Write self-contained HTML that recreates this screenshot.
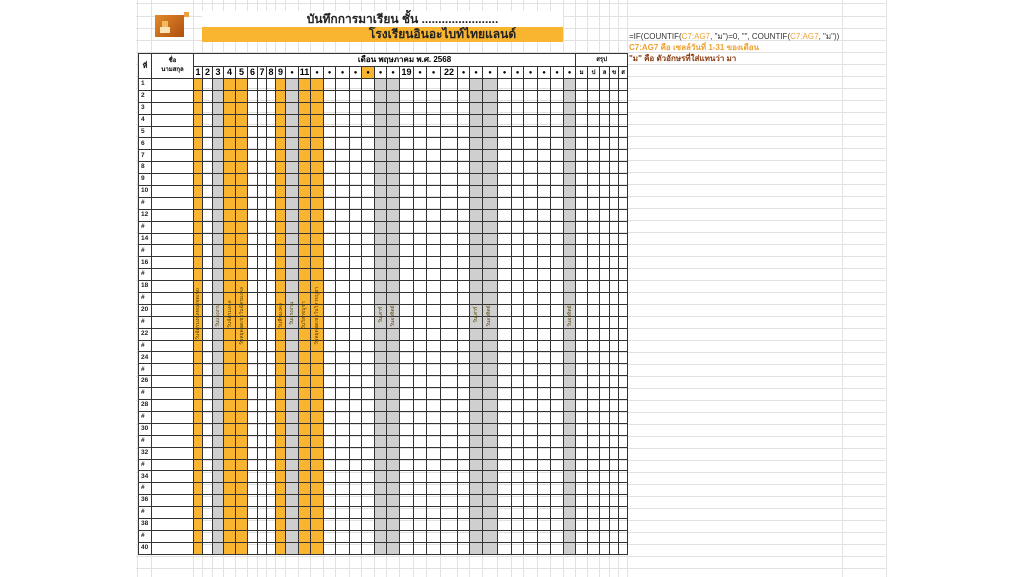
<!DOCTYPE html>
<html><head><meta charset="utf-8">
<style>
*{margin:0;padding:0;box-sizing:border-box}
body{width:1024px;height:577px;background:#fff;position:relative;overflow:hidden;font-family:"Liberation Sans","Noto Sans CJK SC",sans-serif}
#grid{position:absolute;left:136px;top:0;width:750px;height:577px;
background-image:repeating-linear-gradient(to bottom,transparent 0,transparent 11px,#e2e2e2 11px,#e2e2e2 12px);background-position:0 5px}
.vl{position:absolute;top:0;width:1px;height:577px;background:#e2e2e2}
table{position:absolute;left:138px;top:53px;border-collapse:collapse;table-layout:fixed;width:488px;background:transparent}
td{border:1px solid #333;font-size:7px;text-align:center;vertical-align:middle;overflow:hidden;white-space:nowrap;padding:0;line-height:1}
tr.d td{height:11.9px}
tr.d td.n{background:#fff;font-size:6.5px;font-weight:bold;text-align:left;padding-left:2px;color:#222}
tr.d td.nm{background:#fff}
.h td{background:#fff;font-weight:bold}
.h2 td{font-size:9px;height:12px}
.h2 td.dt{font-size:6px}
.o{background:#f9b52f}
.g{background:#cfcfcf}
.vt{position:absolute;font-size:5px;color:#5a4000;transform:rotate(-90deg);transform-origin:left top;white-space:nowrap}
</style></head><body>
<div id="grid"></div>
<div class="vl" style="left:137px"></div><div class="vl" style="left:151px"></div><div class="vl" style="left:193px"></div>
<div class="vl" style="left:202px"></div><div class="vl" style="left:212px"></div><div class="vl" style="left:223px"></div><div class="vl" style="left:235px"></div><div class="vl" style="left:247px"></div><div class="vl" style="left:257px"></div><div class="vl" style="left:266px"></div><div class="vl" style="left:275px"></div><div class="vl" style="left:285px"></div><div class="vl" style="left:298px"></div><div class="vl" style="left:310px"></div><div class="vl" style="left:323px"></div><div class="vl" style="left:335px"></div><div class="vl" style="left:349px"></div><div class="vl" style="left:361px"></div><div class="vl" style="left:374px"></div><div class="vl" style="left:386px"></div><div class="vl" style="left:399px"></div><div class="vl" style="left:413px"></div><div class="vl" style="left:426px"></div><div class="vl" style="left:440px"></div><div class="vl" style="left:457px"></div><div class="vl" style="left:469px"></div><div class="vl" style="left:482px"></div><div class="vl" style="left:497px"></div><div class="vl" style="left:511px"></div><div class="vl" style="left:523px"></div><div class="vl" style="left:537px"></div><div class="vl" style="left:550px"></div><div class="vl" style="left:563px"></div><div class="vl" style="left:575px"></div><div class="vl" style="left:587px"></div><div class="vl" style="left:599px"></div><div class="vl" style="left:609px"></div><div class="vl" style="left:618px"></div><div class="vl" style="left:627px"></div><div class="vl" style="left:842px"></div><div class="vl" style="left:886px"></div>

<div style="position:absolute;left:155px;top:15px;width:29px;height:22px;background:linear-gradient(135deg,#e08a2a,#b14f10)"></div>
<div style="position:absolute;left:160px;top:27px;width:10px;height:6px;background:#fbe3b5"></div>
<div style="position:absolute;left:162px;top:21px;width:6px;height:6px;background:#f4b860"></div>
<div style="position:absolute;left:184px;top:12px;width:5px;height:5px;background:#f0a040"></div>

<div style="position:absolute;left:202px;top:11px;width:361px;height:16px;background:#fff;text-align:center;font-weight:bold;font-size:12px;line-height:16px;color:#222;padding-left:40px">บันทึกการมาเรียน ชั้น .......................</div>
<div style="position:absolute;left:202px;top:27px;width:361px;height:15px;background:#f9b52f;text-align:center;font-weight:bold;font-size:12px;line-height:15px;color:#222;padding-left:120px">โรงเรียนอินอะไบท์ไทยแลนด์</div>

<div style="position:absolute;left:629px;top:31px;font-size:8px;line-height:11px;color:#333;white-space:nowrap">=IF(COUNTIF(<span style="color:#f0a030">C7:AG7</span>, "ม")=0, "", COUNTIF(<span style="color:#f0a030">C7:AG7</span>, "ม"))<br><span style="color:#f0a030;font-weight:bold">C7:AG7 คือ เซลล์วันที่ 1-31 ของเดือน</span><br><span style="color:#8a3a10;font-weight:bold">"ม" คือ ตัวอักษรที่ใส่แทนว่า มา</span></div>

<table>
<colgroup>
<col style="width:13px"><col style="width:42px">
<col class="o" style="width:9px"><col style="width:10px"><col class="g" style="width:11px"><col class="o" style="width:12px"><col class="o" style="width:12px"><col style="width:10px"><col style="width:9px"><col style="width:9px"><col class="o" style="width:10px"><col class="g" style="width:13px"><col class="o" style="width:12px"><col class="o" style="width:13px"><col style="width:12px"><col style="width:14px"><col style="width:12px"><col style="width:13px"><col class="g" style="width:12px"><col class="g" style="width:13px"><col style="width:14px"><col style="width:13px"><col style="width:14px"><col style="width:17px"><col style="width:12px"><col class="g" style="width:13px"><col class="g" style="width:15px"><col style="width:14px"><col style="width:12px"><col style="width:14px"><col style="width:13px"><col style="width:13px"><col class="g" style="width:12px">
<col style="width:12px"><col style="width:12px"><col style="width:10px"><col style="width:9px"><col style="width:9px">
</colgroup>
<tr class="h" style="height:13px"><td rowspan="2" style="font-size:7px">ที่</td><td rowspan="2" style="font-size:6px;line-height:9px">ชื่อ<br>นามสกุล</td><td colspan="31" style="font-size:8px;padding-left:40px">เดือน พฤษภาคม พ.ศ. 2568</td><td colspan="5" style="font-size:6px">สรุป</td></tr>
<tr class="h h2"><td>1</td><td>2</td><td>3</td><td>4</td><td>5</td><td>6</td><td>7</td><td>8</td><td>9</td><td class="dt">●</td><td>11</td><td class="dt">●</td><td class="dt">●</td><td class="dt">●</td><td class="dt">●</td><td class="dt" style="background:#f9b52f">●</td><td class="dt">●</td><td class="dt">●</td><td>19</td><td class="dt">●</td><td class="dt">●</td><td>22</td><td class="dt">●</td><td class="dt">●</td><td class="dt">●</td><td class="dt">●</td><td class="dt">●</td><td class="dt">●</td><td class="dt">●</td><td class="dt">●</td><td class="dt">●</td><td style="font-size:6px">ม</td><td style="font-size:6px">ป</td><td style="font-size:6px">ล</td><td style="font-size:6px">ข</td><td style="font-size:6px">ส</td></tr>
<tr class="d"><td class="n">1</td><td class="nm"></td><td></td><td></td><td></td><td></td><td></td><td></td><td></td><td></td><td></td><td></td><td></td><td></td><td></td><td></td><td></td><td></td><td></td><td></td><td></td><td></td><td></td><td></td><td></td><td></td><td></td><td></td><td></td><td></td><td></td><td></td><td></td><td></td><td></td><td></td><td></td><td></td></tr>
<tr class="d"><td class="n">2</td><td class="nm"></td><td></td><td></td><td></td><td></td><td></td><td></td><td></td><td></td><td></td><td></td><td></td><td></td><td></td><td></td><td></td><td></td><td></td><td></td><td></td><td></td><td></td><td></td><td></td><td></td><td></td><td></td><td></td><td></td><td></td><td></td><td></td><td></td><td></td><td></td><td></td><td></td></tr>
<tr class="d"><td class="n">3</td><td class="nm"></td><td></td><td></td><td></td><td></td><td></td><td></td><td></td><td></td><td></td><td></td><td></td><td></td><td></td><td></td><td></td><td></td><td></td><td></td><td></td><td></td><td></td><td></td><td></td><td></td><td></td><td></td><td></td><td></td><td></td><td></td><td></td><td></td><td></td><td></td><td></td><td></td></tr>
<tr class="d"><td class="n">4</td><td class="nm"></td><td></td><td></td><td></td><td></td><td></td><td></td><td></td><td></td><td></td><td></td><td></td><td></td><td></td><td></td><td></td><td></td><td></td><td></td><td></td><td></td><td></td><td></td><td></td><td></td><td></td><td></td><td></td><td></td><td></td><td></td><td></td><td></td><td></td><td></td><td></td><td></td></tr>
<tr class="d"><td class="n">5</td><td class="nm"></td><td></td><td></td><td></td><td></td><td></td><td></td><td></td><td></td><td></td><td></td><td></td><td></td><td></td><td></td><td></td><td></td><td></td><td></td><td></td><td></td><td></td><td></td><td></td><td></td><td></td><td></td><td></td><td></td><td></td><td></td><td></td><td></td><td></td><td></td><td></td><td></td></tr>
<tr class="d"><td class="n">6</td><td class="nm"></td><td></td><td></td><td></td><td></td><td></td><td></td><td></td><td></td><td></td><td></td><td></td><td></td><td></td><td></td><td></td><td></td><td></td><td></td><td></td><td></td><td></td><td></td><td></td><td></td><td></td><td></td><td></td><td></td><td></td><td></td><td></td><td></td><td></td><td></td><td></td><td></td></tr>
<tr class="d"><td class="n">7</td><td class="nm"></td><td></td><td></td><td></td><td></td><td></td><td></td><td></td><td></td><td></td><td></td><td></td><td></td><td></td><td></td><td></td><td></td><td></td><td></td><td></td><td></td><td></td><td></td><td></td><td></td><td></td><td></td><td></td><td></td><td></td><td></td><td></td><td></td><td></td><td></td><td></td><td></td></tr>
<tr class="d"><td class="n">8</td><td class="nm"></td><td></td><td></td><td></td><td></td><td></td><td></td><td></td><td></td><td></td><td></td><td></td><td></td><td></td><td></td><td></td><td></td><td></td><td></td><td></td><td></td><td></td><td></td><td></td><td></td><td></td><td></td><td></td><td></td><td></td><td></td><td></td><td></td><td></td><td></td><td></td><td></td></tr>
<tr class="d"><td class="n">9</td><td class="nm"></td><td></td><td></td><td></td><td></td><td></td><td></td><td></td><td></td><td></td><td></td><td></td><td></td><td></td><td></td><td></td><td></td><td></td><td></td><td></td><td></td><td></td><td></td><td></td><td></td><td></td><td></td><td></td><td></td><td></td><td></td><td></td><td></td><td></td><td></td><td></td><td></td></tr>
<tr class="d"><td class="n">10</td><td class="nm"></td><td></td><td></td><td></td><td></td><td></td><td></td><td></td><td></td><td></td><td></td><td></td><td></td><td></td><td></td><td></td><td></td><td></td><td></td><td></td><td></td><td></td><td></td><td></td><td></td><td></td><td></td><td></td><td></td><td></td><td></td><td></td><td></td><td></td><td></td><td></td><td></td></tr>
<tr class="d"><td class="n">#</td><td class="nm"></td><td></td><td></td><td></td><td></td><td></td><td></td><td></td><td></td><td></td><td></td><td></td><td></td><td></td><td></td><td></td><td></td><td></td><td></td><td></td><td></td><td></td><td></td><td></td><td></td><td></td><td></td><td></td><td></td><td></td><td></td><td></td><td></td><td></td><td></td><td></td><td></td></tr>
<tr class="d"><td class="n">12</td><td class="nm"></td><td></td><td></td><td></td><td></td><td></td><td></td><td></td><td></td><td></td><td></td><td></td><td></td><td></td><td></td><td></td><td></td><td></td><td></td><td></td><td></td><td></td><td></td><td></td><td></td><td></td><td></td><td></td><td></td><td></td><td></td><td></td><td></td><td></td><td></td><td></td><td></td></tr>
<tr class="d"><td class="n">#</td><td class="nm"></td><td></td><td></td><td></td><td></td><td></td><td></td><td></td><td></td><td></td><td></td><td></td><td></td><td></td><td></td><td></td><td></td><td></td><td></td><td></td><td></td><td></td><td></td><td></td><td></td><td></td><td></td><td></td><td></td><td></td><td></td><td></td><td></td><td></td><td></td><td></td><td></td></tr>
<tr class="d"><td class="n">14</td><td class="nm"></td><td></td><td></td><td></td><td></td><td></td><td></td><td></td><td></td><td></td><td></td><td></td><td></td><td></td><td></td><td></td><td></td><td></td><td></td><td></td><td></td><td></td><td></td><td></td><td></td><td></td><td></td><td></td><td></td><td></td><td></td><td></td><td></td><td></td><td></td><td></td><td></td></tr>
<tr class="d"><td class="n">#</td><td class="nm"></td><td></td><td></td><td></td><td></td><td></td><td></td><td></td><td></td><td></td><td></td><td></td><td></td><td></td><td></td><td></td><td></td><td></td><td></td><td></td><td></td><td></td><td></td><td></td><td></td><td></td><td></td><td></td><td></td><td></td><td></td><td></td><td></td><td></td><td></td><td></td><td></td></tr>
<tr class="d"><td class="n">16</td><td class="nm"></td><td></td><td></td><td></td><td></td><td></td><td></td><td></td><td></td><td></td><td></td><td></td><td></td><td></td><td></td><td></td><td></td><td></td><td></td><td></td><td></td><td></td><td></td><td></td><td></td><td></td><td></td><td></td><td></td><td></td><td></td><td></td><td></td><td></td><td></td><td></td><td></td></tr>
<tr class="d"><td class="n">#</td><td class="nm"></td><td></td><td></td><td></td><td></td><td></td><td></td><td></td><td></td><td></td><td></td><td></td><td></td><td></td><td></td><td></td><td></td><td></td><td></td><td></td><td></td><td></td><td></td><td></td><td></td><td></td><td></td><td></td><td></td><td></td><td></td><td></td><td></td><td></td><td></td><td></td><td></td></tr>
<tr class="d"><td class="n">18</td><td class="nm"></td><td></td><td></td><td></td><td></td><td></td><td></td><td></td><td></td><td></td><td></td><td></td><td></td><td></td><td></td><td></td><td></td><td></td><td></td><td></td><td></td><td></td><td></td><td></td><td></td><td></td><td></td><td></td><td></td><td></td><td></td><td></td><td></td><td></td><td></td><td></td><td></td></tr>
<tr class="d"><td class="n">#</td><td class="nm"></td><td></td><td></td><td></td><td></td><td></td><td></td><td></td><td></td><td></td><td></td><td></td><td></td><td></td><td></td><td></td><td></td><td></td><td></td><td></td><td></td><td></td><td></td><td></td><td></td><td></td><td></td><td></td><td></td><td></td><td></td><td></td><td></td><td></td><td></td><td></td><td></td></tr>
<tr class="d"><td class="n">20</td><td class="nm"></td><td></td><td></td><td></td><td></td><td></td><td></td><td></td><td></td><td></td><td></td><td></td><td></td><td></td><td></td><td></td><td></td><td></td><td></td><td></td><td></td><td></td><td></td><td></td><td></td><td></td><td></td><td></td><td></td><td></td><td></td><td></td><td></td><td></td><td></td><td></td><td></td></tr>
<tr class="d"><td class="n">#</td><td class="nm"></td><td></td><td></td><td></td><td></td><td></td><td></td><td></td><td></td><td></td><td></td><td></td><td></td><td></td><td></td><td></td><td></td><td></td><td></td><td></td><td></td><td></td><td></td><td></td><td></td><td></td><td></td><td></td><td></td><td></td><td></td><td></td><td></td><td></td><td></td><td></td><td></td></tr>
<tr class="d"><td class="n">22</td><td class="nm"></td><td></td><td></td><td></td><td></td><td></td><td></td><td></td><td></td><td></td><td></td><td></td><td></td><td></td><td></td><td></td><td></td><td></td><td></td><td></td><td></td><td></td><td></td><td></td><td></td><td></td><td></td><td></td><td></td><td></td><td></td><td></td><td></td><td></td><td></td><td></td><td></td></tr>
<tr class="d"><td class="n">#</td><td class="nm"></td><td></td><td></td><td></td><td></td><td></td><td></td><td></td><td></td><td></td><td></td><td></td><td></td><td></td><td></td><td></td><td></td><td></td><td></td><td></td><td></td><td></td><td></td><td></td><td></td><td></td><td></td><td></td><td></td><td></td><td></td><td></td><td></td><td></td><td></td><td></td><td></td></tr>
<tr class="d"><td class="n">24</td><td class="nm"></td><td></td><td></td><td></td><td></td><td></td><td></td><td></td><td></td><td></td><td></td><td></td><td></td><td></td><td></td><td></td><td></td><td></td><td></td><td></td><td></td><td></td><td></td><td></td><td></td><td></td><td></td><td></td><td></td><td></td><td></td><td></td><td></td><td></td><td></td><td></td><td></td></tr>
<tr class="d"><td class="n">#</td><td class="nm"></td><td></td><td></td><td></td><td></td><td></td><td></td><td></td><td></td><td></td><td></td><td></td><td></td><td></td><td></td><td></td><td></td><td></td><td></td><td></td><td></td><td></td><td></td><td></td><td></td><td></td><td></td><td></td><td></td><td></td><td></td><td></td><td></td><td></td><td></td><td></td><td></td></tr>
<tr class="d"><td class="n">26</td><td class="nm"></td><td></td><td></td><td></td><td></td><td></td><td></td><td></td><td></td><td></td><td></td><td></td><td></td><td></td><td></td><td></td><td></td><td></td><td></td><td></td><td></td><td></td><td></td><td></td><td></td><td></td><td></td><td></td><td></td><td></td><td></td><td></td><td></td><td></td><td></td><td></td><td></td></tr>
<tr class="d"><td class="n">#</td><td class="nm"></td><td></td><td></td><td></td><td></td><td></td><td></td><td></td><td></td><td></td><td></td><td></td><td></td><td></td><td></td><td></td><td></td><td></td><td></td><td></td><td></td><td></td><td></td><td></td><td></td><td></td><td></td><td></td><td></td><td></td><td></td><td></td><td></td><td></td><td></td><td></td><td></td></tr>
<tr class="d"><td class="n">28</td><td class="nm"></td><td></td><td></td><td></td><td></td><td></td><td></td><td></td><td></td><td></td><td></td><td></td><td></td><td></td><td></td><td></td><td></td><td></td><td></td><td></td><td></td><td></td><td></td><td></td><td></td><td></td><td></td><td></td><td></td><td></td><td></td><td></td><td></td><td></td><td></td><td></td><td></td></tr>
<tr class="d"><td class="n">#</td><td class="nm"></td><td></td><td></td><td></td><td></td><td></td><td></td><td></td><td></td><td></td><td></td><td></td><td></td><td></td><td></td><td></td><td></td><td></td><td></td><td></td><td></td><td></td><td></td><td></td><td></td><td></td><td></td><td></td><td></td><td></td><td></td><td></td><td></td><td></td><td></td><td></td><td></td></tr>
<tr class="d"><td class="n">30</td><td class="nm"></td><td></td><td></td><td></td><td></td><td></td><td></td><td></td><td></td><td></td><td></td><td></td><td></td><td></td><td></td><td></td><td></td><td></td><td></td><td></td><td></td><td></td><td></td><td></td><td></td><td></td><td></td><td></td><td></td><td></td><td></td><td></td><td></td><td></td><td></td><td></td><td></td></tr>
<tr class="d"><td class="n">#</td><td class="nm"></td><td></td><td></td><td></td><td></td><td></td><td></td><td></td><td></td><td></td><td></td><td></td><td></td><td></td><td></td><td></td><td></td><td></td><td></td><td></td><td></td><td></td><td></td><td></td><td></td><td></td><td></td><td></td><td></td><td></td><td></td><td></td><td></td><td></td><td></td><td></td><td></td></tr>
<tr class="d"><td class="n">32</td><td class="nm"></td><td></td><td></td><td></td><td></td><td></td><td></td><td></td><td></td><td></td><td></td><td></td><td></td><td></td><td></td><td></td><td></td><td></td><td></td><td></td><td></td><td></td><td></td><td></td><td></td><td></td><td></td><td></td><td></td><td></td><td></td><td></td><td></td><td></td><td></td><td></td><td></td></tr>
<tr class="d"><td class="n">#</td><td class="nm"></td><td></td><td></td><td></td><td></td><td></td><td></td><td></td><td></td><td></td><td></td><td></td><td></td><td></td><td></td><td></td><td></td><td></td><td></td><td></td><td></td><td></td><td></td><td></td><td></td><td></td><td></td><td></td><td></td><td></td><td></td><td></td><td></td><td></td><td></td><td></td><td></td></tr>
<tr class="d"><td class="n">34</td><td class="nm"></td><td></td><td></td><td></td><td></td><td></td><td></td><td></td><td></td><td></td><td></td><td></td><td></td><td></td><td></td><td></td><td></td><td></td><td></td><td></td><td></td><td></td><td></td><td></td><td></td><td></td><td></td><td></td><td></td><td></td><td></td><td></td><td></td><td></td><td></td><td></td><td></td></tr>
<tr class="d"><td class="n">#</td><td class="nm"></td><td></td><td></td><td></td><td></td><td></td><td></td><td></td><td></td><td></td><td></td><td></td><td></td><td></td><td></td><td></td><td></td><td></td><td></td><td></td><td></td><td></td><td></td><td></td><td></td><td></td><td></td><td></td><td></td><td></td><td></td><td></td><td></td><td></td><td></td><td></td><td></td></tr>
<tr class="d"><td class="n">36</td><td class="nm"></td><td></td><td></td><td></td><td></td><td></td><td></td><td></td><td></td><td></td><td></td><td></td><td></td><td></td><td></td><td></td><td></td><td></td><td></td><td></td><td></td><td></td><td></td><td></td><td></td><td></td><td></td><td></td><td></td><td></td><td></td><td></td><td></td><td></td><td></td><td></td><td></td></tr>
<tr class="d"><td class="n">#</td><td class="nm"></td><td></td><td></td><td></td><td></td><td></td><td></td><td></td><td></td><td></td><td></td><td></td><td></td><td></td><td></td><td></td><td></td><td></td><td></td><td></td><td></td><td></td><td></td><td></td><td></td><td></td><td></td><td></td><td></td><td></td><td></td><td></td><td></td><td></td><td></td><td></td><td></td></tr>
<tr class="d"><td class="n">38</td><td class="nm"></td><td></td><td></td><td></td><td></td><td></td><td></td><td></td><td></td><td></td><td></td><td></td><td></td><td></td><td></td><td></td><td></td><td></td><td></td><td></td><td></td><td></td><td></td><td></td><td></td><td></td><td></td><td></td><td></td><td></td><td></td><td></td><td></td><td></td><td></td><td></td><td></td></tr>
<tr class="d"><td class="n">#</td><td class="nm"></td><td></td><td></td><td></td><td></td><td></td><td></td><td></td><td></td><td></td><td></td><td></td><td></td><td></td><td></td><td></td><td></td><td></td><td></td><td></td><td></td><td></td><td></td><td></td><td></td><td></td><td></td><td></td><td></td><td></td><td></td><td></td><td></td><td></td><td></td><td></td><td></td></tr>
<tr class="d"><td class="n">40</td><td class="nm"></td><td></td><td></td><td></td><td></td><td></td><td></td><td></td><td></td><td></td><td></td><td></td><td></td><td></td><td></td><td></td><td></td><td></td><td></td><td></td><td></td><td></td><td></td><td></td><td></td><td></td><td></td><td></td><td></td><td></td><td></td><td></td><td></td><td></td><td></td><td></td><td></td></tr>
</table>

<span class="vt" style="left:194px;top:340px">วันฉัตรมงคลหยุดชดเชย</span>
<span class="vt" style="left:214px;top:327px">วันแรงงาน</span>
<span class="vt" style="left:226px;top:328px">วันฉัตรมงคล</span>
<span class="vt" style="left:238px;top:345px">วันหยุดชดเชยวันฉัตรมงคล</span>
<span class="vt" style="left:277px;top:328px">วันพืชมงคล</span>
<span class="vt" style="left:288px;top:325px">วันแรงงาน</span>
<span class="vt" style="left:300px;top:329px">วันวิสาขบูชา</span>
<span class="vt" style="left:313px;top:345px">วันหยุดชดเชยวันวิสาขบูชา</span>
<span class="vt" style="left:377px;top:323px">วันเสาร์</span>
<span class="vt" style="left:389px;top:327px">วันอาทิตย์</span>
<span class="vt" style="left:472px;top:323px">วันเสาร์</span>
<span class="vt" style="left:485px;top:327px">วันอาทิตย์</span>
<span class="vt" style="left:566px;top:327px">วันอาทิตย์</span>
</body></html>
